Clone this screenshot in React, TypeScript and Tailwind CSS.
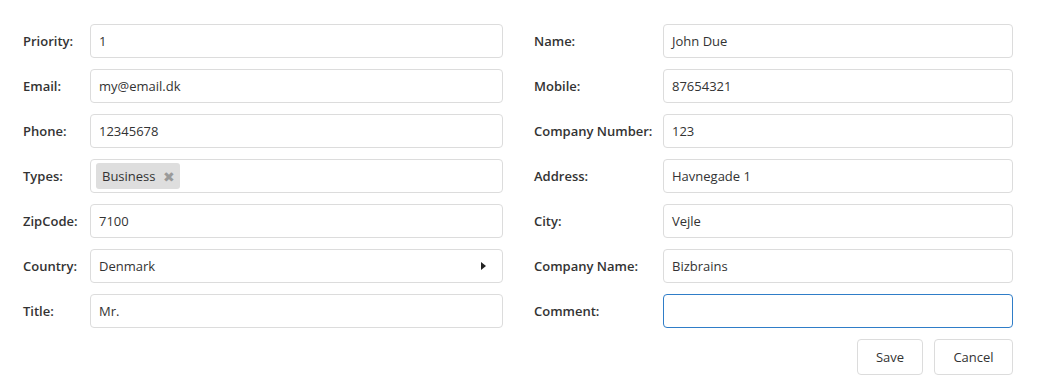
import React from 'react';

const leftRows = [
  { label: 'Priority:', value: '1' },
  { label: 'Email:', value: 'my@email.dk' },
  { label: 'Phone:', value: '12345678' },
  { label: 'Types:', value: '', tag: 'Business' },
  { label: 'ZipCode:', value: '7100' },
  { label: 'Country:', value: 'Denmark', select: true },
  { label: 'Title:', value: 'Mr.' },
];

const rightRows = [
  { label: 'Name:', value: 'John Due' },
  { label: 'Mobile:', value: '87654321' },
  { label: 'Company Number:', value: '123' },
  { label: 'Address:', value: 'Havnegade 1' },
  { label: 'City:', value: 'Vejle' },
  { label: 'Company Name:', value: 'Bizbrains' },
  { label: 'Comment:', value: '', focused: true },
];

type Row = { label: string; value: string; tag?: string; select?: boolean; focused?: boolean };

const Field: React.FC<{ row: Row; labelW: string; inputW: string }> = ({ row, labelW, inputW }) => (
  <div className="flex items-center h-[34px]">
    <div className={`${labelW} shrink-0 pt-[2px] font-semibold text-[#333]`}>{row.label}</div>
    <div
      className={`${inputW} h-[34px] flex items-center rounded-[4px] border bg-white ${
        row.focused ? 'border-[#2f7dc8]' : 'border-[#dcdcdc]'
      } ${row.tag ? 'pl-[5px]' : 'pl-[8px]'} pr-[14px]`}
    >
      {row.tag ? (
        <span className="flex items-center h-[26px] rounded-[3px] bg-[#dedede] pl-[6px] pr-[5px] pt-[1px] text-[#333]">
          {row.tag}
          <span className="ml-[7px] text-[14px] leading-none text-[#9a9a9a]">✖</span>
        </span>
      ) : (
        <span className="flex-1 pt-[2px] text-[#333]">{row.value}</span>
      )}
      {row.select && (
        <svg width="5" height="8" viewBox="0 0 5 8" className="mr-[2px]">
          <path d="M0 0 L5 4 L0 8 Z" fill="#222" />
        </svg>
      )}
    </div>
  </div>
);

export default function App() {
  return (
    <div
      className="w-[1037px] h-[391px] bg-white text-[13px] pt-[24px]"
      style={{ fontFamily: '"Open Sans", "Noto Sans", sans-serif' }}
    >
      <div className="flex">
        <div className="pl-[23px] flex flex-col gap-[11px]">
          {leftRows.map((r) => (
            <Field key={r.label} row={r} labelW="w-[67px]" inputW="w-[413px]" />
          ))}
        </div>
        <div className="pl-[31px] flex flex-col gap-[11px]">
          {rightRows.map((r) => (
            <Field key={r.label} row={r} labelW="w-[129px]" inputW="w-[350px]" />
          ))}
          <div className="flex justify-end gap-[11px]">
            <button className="h-[36px] w-[66px] rounded-[4px] border border-[#dcdcdc] bg-white pt-[2px] text-[#333]">
              Save
            </button>
            <button className="h-[36px] w-[79px] rounded-[4px] border border-[#dcdcdc] bg-white pt-[2px] text-[#333]">
              Cancel
            </button>
          </div>
        </div>
      </div>
    </div>
  );
}
